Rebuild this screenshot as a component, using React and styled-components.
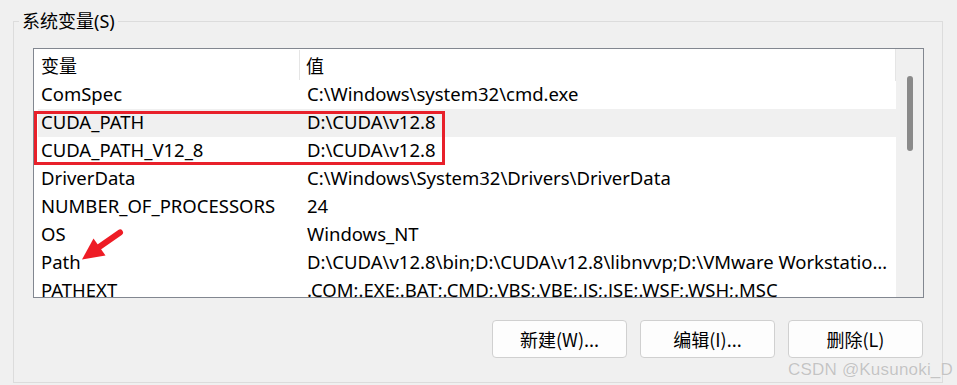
import React from "react";
import styled, { createGlobalStyle } from "styled-components";

const GlobalStyle = createGlobalStyle`
  html, body {
    margin: 0;
    padding: 0;
    background: #f0f0f0;
  }
  body {
    font-family: "Noto Sans", "Noto Sans CJK SC", sans-serif;
    color: #000;
  }
`;

const variables = [
  { name: "ComSpec", value: "C:\\Windows\\system32\\cmd.exe" },
  { name: "CUDA_PATH", value: "D:\\CUDA\\v12.8", hover: true },
  { name: "CUDA_PATH_V12_8", value: "D:\\CUDA\\v12.8" },
  { name: "DriverData", value: "C:\\Windows\\System32\\Drivers\\DriverData" },
  { name: "NUMBER_OF_PROCESSORS", value: "24" },
  { name: "OS", value: "Windows_NT" },
  {
    name: "Path",
    value:
      "D:\\CUDA\\v12.8\\bin;D:\\CUDA\\v12.8\\libnvvp;D:\\VMware Workstation\\bin\\;C:\\Windows\\system32",
  },
  { name: "PATHEXT", value: ".COM;.EXE;.BAT;.CMD;.VBS;.VBE;.JS;.JSE;.WSF;.WSH;.MSC" },
];

const App = () => {
  return (
    <Page>
      <GlobalStyle />
      <GroupBox>
        <Legend>系统变量(S)</Legend>
        <GroupContent>
          <ListBox>
            <TableArea>
              <HeaderRow>
                <HeaderCell $width="262px">变量</HeaderCell>
                <HeaderCell $flex>值</HeaderCell>
              </HeaderRow>
              {variables.map((v) => (
                <Row key={v.name} $hover={v.hover}>
                  <NameCell>{v.name}</NameCell>
                  <ValueCell>{v.value}</ValueCell>
                </Row>
              ))}
            </TableArea>
            <ScrollTrack>
              <ScrollThumb />
            </ScrollTrack>
            <Highlight />
            <Arrow viewBox="0 0 50 42" width="50" height="42">
              <line
                x1="42"
                y1="7.5"
                x2="19"
                y2="23.5"
                stroke="#ee1c25"
                strokeWidth="6"
                strokeLinecap="round"
              />
              <polygon points="4,34.5 27.5,30.5 15.5,13.5" fill="#ee1c25" />
            </Arrow>
          </ListBox>
          <ButtonRow>
            <DialogButton>新建(W)...</DialogButton>
            <DialogButton>编辑(I)...</DialogButton>
            <DialogButton>删除(L)</DialogButton>
          </ButtonRow>
        </GroupContent>
      </GroupBox>
      <Watermark>CSDN @Kusunoki_D</Watermark>
    </Page>
  );
};

const Page = styled.div`
  position: relative;
  width: 957px;
  height: 385px;
  padding: 9px 0 0 13px;
  box-sizing: border-box;
  overflow: hidden;
`;

const GroupBox = styled.fieldset`
  margin: 0;
  width: 930px;
  height: 374px;
  box-sizing: border-box;
  border: 1px solid #dcdcdc;
  padding: 0;
  min-width: 0;
`;

const Legend = styled.legend`
  margin-left: 5px;
  padding: 0 3px;
  font-size: 18px;
  line-height: 24px;
  color: #000;
`;

const GroupContent = styled.div`
  padding: 15px 0 0 19px;
`;

const ListBox = styled.div`
  position: relative;
  display: flex;
  width: 891px;
  height: 250px;
  box-sizing: border-box;
  border: 1px solid #828790;
  background: #fff;
  overflow: hidden;
`;

const TableArea = styled.div`
  flex: 1;
  min-width: 0;
  overflow: hidden;
  font-size: 18.5px;
`;

const HeaderRow = styled.div`
  display: flex;
  height: 32px;
  align-items: stretch;
  padding-left: 4px;
  border-right: 1px solid #e5e5e5;
  box-sizing: border-box;
`;

const HeaderCell = styled.div`
  display: flex;
  align-items: center;
  padding-left: ${(p) => (p.$flex ? "6px" : "3px")};
  width: ${(p) => p.$width || "auto"};
  flex: ${(p) => (p.$flex ? 1 : "none")};
  box-sizing: border-box;
  font-size: 18px;
  border-right: ${(p) => (p.$flex ? "none" : "1px solid #e5e5e5")};
  margin: 1px 0;
`;

const Row = styled.div`
  display: flex;
  align-items: center;
  height: 28px;
  padding-bottom: 3px;
  box-sizing: border-box;
  margin-left: 4px;
  background: ${(p) => (p.$hover ? "#f0f0f0" : "transparent")};
`;

const NameCell = styled.div`
  width: 262px;
  flex: none;
  padding-left: 3px;
  box-sizing: border-box;
  white-space: nowrap;
  overflow: hidden;
`;

const ValueCell = styled.div`
  flex: 1;
  min-width: 0;
  padding: 0 6px 0 7px;
  white-space: nowrap;
  overflow: hidden;
  text-overflow: ellipsis;
`;

const ScrollTrack = styled.div`
  width: 27px;
  flex: none;
  background: #f0f0f0;
  display: flex;
  justify-content: center;
  padding-top: 27px;
  box-sizing: border-box;
`;

const ScrollThumb = styled.div`
  width: 6px;
  height: 75px;
  border-radius: 3px;
  background: #8a8a8a;
`;

const Highlight = styled.div`
  position: absolute;
  left: 0;
  top: 62px;
  width: 411px;
  height: 54px;
  box-sizing: border-box;
  border: 3px solid #e8202a;
  pointer-events: none;
`;

const Arrow = styled.svg`
  position: absolute;
  left: 44px;
  top: 176px;
`;

const ButtonRow = styled.div`
  display: flex;
  justify-content: flex-end;
  gap: 13px;
  width: 890px;
  margin-top: 22px;
`;

const DialogButton = styled.button`
  width: 135px;
  height: 38px;
  box-sizing: border-box;
  border: 1px solid #d0d0d0;
  border-radius: 4px;
  background: #fdfdfd;
  font-family: "Noto Sans CJK SC", "Noto Sans", sans-serif;
  font-size: 18px;
  color: #000;
  padding: 0;
`;

const Watermark = styled.div`
  position: absolute;
  right: 4px;
  bottom: 5px;
  font-family: "Liberation Sans", Arial, sans-serif;
  font-size: 17px;
  color: #c4c4c4;
  text-shadow: 0 0 1px #fff;
  letter-spacing: 0.2px;
`;

export default App;
